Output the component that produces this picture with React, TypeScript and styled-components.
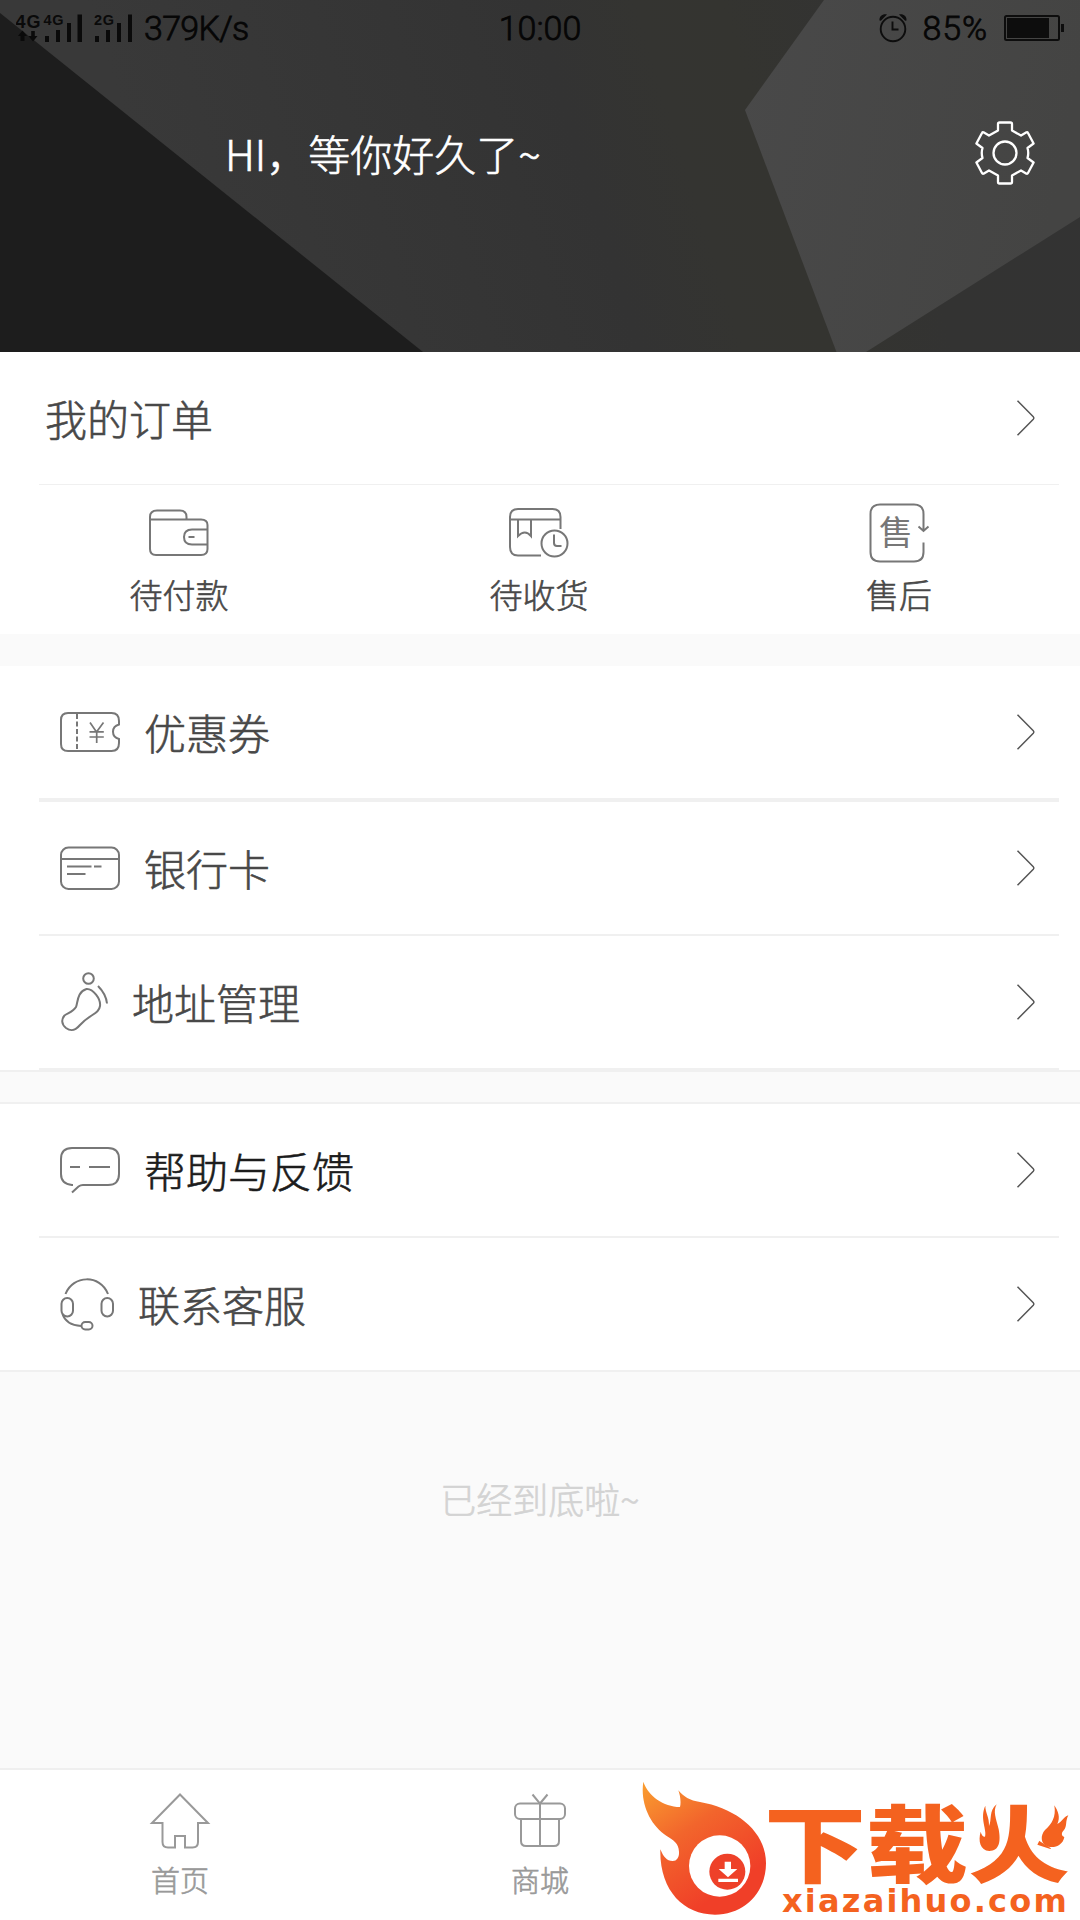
import React from "react";
import styled, { createGlobalStyle } from "styled-components";

const GlobalStyle = createGlobalStyle`
  * { box-sizing: border-box; }
  body { margin: 0; background: #fafafa; }
`;

const Screen = styled.div`
  display: flex;
  flex-direction: column;
  position: relative;
  width: 1080px;
  height: 1920px;
  overflow: hidden;
  background: #fafafa;
  color: #484848;
  font-family: "Noto Sans CJK SC", sans-serif;
  font-weight: 300;
  -webkit-text-stroke-width: 0.6px;
`;

const Hero = styled.header`
  position: relative;
  display: flex;
  flex-direction: column;
  height: 352px;
  flex: none;
  background: #353535;
`;

const HeroArt = styled.svg`
  position: absolute;
  inset: 0;
`;

const StatusBar = styled.div`
  position: relative;
  display: grid;
  grid-template-columns: 1fr auto 1fr;
  align-items: center;
  height: 56px;
  padding: 0 16px;
  color: #060606;
  font-family: Roboto, sans-serif;
  font-weight: 300;
  font-size: 34px;
  line-height: 56px;
  -webkit-text-stroke-width: 0.8px;
`;

const StatusGroup = styled.div<{ $end?: boolean }>`
  display: flex;
  align-items: center;
  justify-content: ${(p) => (p.$end ? "flex-end" : "flex-start")};
`;

const StatusText = styled.span<{ $before?: number; $after?: number; $spacing?: number }>`
  margin-left: ${(p) => p.$before ?? 0}px;
  margin-right: ${(p) => p.$after ?? 0}px;
  letter-spacing: ${(p) => p.$spacing ?? 0}px;
`;

const Welcome = styled.div`
  position: relative;
  display: flex;
  align-items: center;
  justify-content: space-between;
  height: 194px;
  padding: 0 45px 0 225px;
  color: #fff;
`;

const Greeting = styled.span`
  font-size: 42px;
  line-height: 60px;
`;

const Panel = styled.section`
  flex: none;
  background: #fff;
`;

const Rule = styled.div<{ $h?: number; $full?: boolean }>`
  height: ${(p) => p.$h ?? 2}px;
  margin: ${(p) => (p.$full ? "0" : "0 21px 0 39px")};
  background: #f0f0f0;
`;

const Gap = styled.div<{ $h: number }>`
  flex: none;
  height: ${(p) => p.$h}px;
  background: #fafafa;
`;

const Row = styled.div<{ $indent?: number }>`
  display: flex;
  align-items: center;
  gap: 24px;
  height: 132px;
  padding: 0 45px 0 ${(p) => p.$indent ?? 60}px;
`;

const RowLabel = styled.span<{ $dark?: boolean }>`
  flex: 1;
  font-size: 42px;
  line-height: 60px;
  color: ${(p) => (p.$dark ? "#1c1c1c" : "#484848")};
`;

const Orders = styled.div`
  display: grid;
  grid-template-columns: repeat(3, 360px);
  height: 149px;
`;

const OrderItem = styled.div`
  display: flex;
  flex-direction: column;
  align-items: center;
  padding: 18px 2px 0 0;
  font-size: 33px;
  line-height: 40px;
  gap: 11px;
`;

const EndNote = styled.p`
  flex: 1;
  margin: 0;
  padding-top: 100px;
  text-align: center;
  font-size: 36px;
  line-height: 52px;
  color: #d3d3d3;
`;

const TabBar = styled.nav`
  display: grid;
  grid-template-columns: repeat(3, 360px);
  flex: none;
  height: 152px;
  border-top: 2px solid #efefef;
  background: #fff;
`;

const Tab = styled.div`
  display: flex;
  flex-direction: column;
  align-items: center;
  gap: 10px;
  padding-top: 23px;
  color: #999;
  font-size: 29px;
  line-height: 40px;
`;

const Watermark = styled.div`
  position: absolute;
  right: 0;
  bottom: 0;
  display: flex;
  width: 440px;
  height: 144px;
  -webkit-text-stroke-width: 0;
`;

const Brand = styled.div`
  display: flex;
  flex-direction: column;
  margin-left: -4px;
  padding-top: 20px;
  color: #f4621f;
`;

const BrandName = styled.div`
  display: flex;
  height: 88px;
  font-size: 102px;
  line-height: 88px;
  font-weight: 900;
  white-space: nowrap;
  transform: scaleY(0.82);
`;

const BrandFire = styled.span`
  clip-path: polygon(36% -10%, 63% -10%, 63% 45%, 100% 78%, 100% 115%, 0 115%, 0 76%, 36% 50%);
`;

const BrandUrl = styled.div`
  margin: 3px 0 0 18px;
  font-family: "DejaVu Sans", sans-serif;
  font-weight: 700;
  font-size: 32px;
  line-height: 28px;
  letter-spacing: 2.2px;
  white-space: nowrap;
`;

const FlameAccents = styled.svg`
  position: absolute;
  right: 0;
  bottom: 0;
  fill: #f4621f;
`;

const Outline = styled.svg<{ $w?: number; $color?: string }>`
  flex: none;
  display: block;
  overflow: visible;
  fill: none;
  stroke: ${(p) => p.$color ?? "#777"};
  stroke-width: ${(p) => p.$w ?? 2}px;
`;

const Chevron = () => (
  <Outline width="18" height="36" viewBox="0 0 18 36" $w={1.5} $color="#555">
    <path d="M.5 .8 16.300 16.700q1.200 1.300 0 2.600L.5 35.200" />
  </Outline>
);

const SignalIcon = () => (
  <svg width="118" height="30" viewBox="16 12 118 30" fill="#0a0a0a" fontFamily="Liberation Sans, sans-serif" fontWeight="700" strokeWidth="0">
    <text x="15.5" y="27" fontSize="18" textLength="25">4G</text>
    <text x="43.5" y="24" fontSize="14.5" textLength="20">4G</text>
    <text x="94" y="24" fontSize="14.5" textLength="20">2G</text>
    <path d="M22.500 29.500 27 35H24.500V40H20.500V35H18ZM33 40.500 28.500 35H31.200V30H34.800V35H37.500Z" />
    <path d="M45 35h4v6h-4zM56 29h4v12h-4zM67 22h4v19h-4zM77.500 13.500h4.500v27.500h-4.500zM95 35h4v6h-4zM106 29h4v12h-4zM117 22h4v19h-4zM128 13.500h4v27.500h-4z" />
  </svg>
);

const AlarmIcon = () => (
  <svg width="28" height="30" viewBox="0 0 28 30" fill="none" stroke="#0d0d0d" strokeWidth="1.9">
    <circle cx="14" cy="16" r="12.300" />
    <path d="M13.500 8.500V16.500H19.500" />
    <path d="M.5 7.500C0 3 4 .5 8 1.500L1.800 7.800ZM27.500 7.500C28 3 24 .5 20 1.500L26.200 7.800Z" fill="#0d0d0d" stroke="none" />
  </svg>
);

const BatteryIcon = () => (
  <svg width="60" height="28" viewBox="0 0 60 28" fill="#0d0d0d">
    <rect x="1" y="2" width="54" height="24" rx="1.500" fill="none" stroke="#0d0d0d" strokeWidth="2" />
    <rect x="3" y="4" width="42" height="20" />
    <rect x="57" y="10" width="3" height="8" />
  </svg>
);

const GearIcon = () => (
  <Outline width="60" height="64" viewBox="0 0 60 64" $w={2.3} $color="#fff" strokeLinejoin="round">
    <path d="M23 3Q23 1.500 24.500 1.500H35.500Q37 1.500 37 3V9.500L46 14.500L51.500 11.300Q52.500 11 53 12L58.600 22.500L52.500 27Q54 32 52.500 37L58.600 41.500L53 52Q52.500 53 51.500 52.700L46 49.500L37 54.500V61Q37 62.500 35.500 62.500H24.500Q23 62.500 23 61V54.500L14 49.500L8.500 52.700Q7.500 53 7 52L1.400 41.500L7.500 37Q6 32 7.500 27L1.400 22.500L7 12Q7.500 11 8.500 11.300L14 14.500L23 9.500Z" />
    <circle cx="30" cy="32" r="11.500" />
  </Outline>
);

const WalletIcon = () => (
  <Outline width="60" height="60" viewBox="0 0 60 60">
    <path d="M1 17V14Q1 7.500 8 7.500H31Q37.500 7.500 37.500 14V16.500M1 16.500H52Q58.500 16.500 58.500 22V46Q58.500 52 52 52H7Q1 52 1 46ZM58.500 26.500H43Q35 26.500 35 34Q35 41.500 43 41.500H58.500M39.500 34H45.500" />
  </Outline>
);

const ParcelIcon = () => (
  <Outline width="60" height="60" viewBox="0 0 60 60">
    <path d="M51.500 26V14Q51.500 6 43.500 6H9Q1 6 1 14V44Q1 52.500 9 52.500H32M1 16.500H51.500M9 16.500V33Q16 26 22 33V16.500" />
    <circle cx="45.500" cy="40.500" r="13" />
    <path d="M45 31.500V40Q45 43 48 43H52.500" />
  </Outline>
);

const SaleGlyph = styled.text`
  font-family: "Noto Sans CJK SC", sans-serif;
  font-size: 34px;
  font-weight: 400;
  fill: #777;
  stroke: none;
`;

const AfterSaleIcon = () => (
  <Outline width="60" height="60" viewBox="0 0 60 60">
    <path d="M54.500 28V11Q54.500 1.500 45 1.500H11Q1.500 1.500 1.500 11V49Q1.500 58.500 11 58.500H45Q54.500 58.500 54.500 49V39.500M49.500 23.500 54.500 28 59.500 23.500" />
    <SaleGlyph x="10" y="41.500">售</SaleGlyph>
  </Outline>
);

const CouponIcon = () => (
  <Outline width="60" height="40" viewBox="0 0 60 40">
    <path d="M59 12.500V9Q59 1 51.500 1H8Q1 1 1 8V32Q1 39 8 39H51.500Q59 39 59 31V27Q53 25.500 53 19.800Q53 14 59 12.500Z" />
    <path d="M17 2V39" strokeDasharray="5 2.500" />
    <path d="M30 10.500 36.500 20 43.500 10.500M36.700 19.500V31M29.500 19.800H43.800M29.500 25H43.800" strokeWidth="1.700" />
  </Outline>
);

const CardIcon = () => (
  <Outline width="60" height="44" viewBox="0 0 60 44">
    <rect x="1" y="1.500" width="58" height="41.500" rx="7.500" />
    <path d="M1 13H59M7 20.500H31.500M34 20.500H41.500M7 28H25.500" />
  </Outline>
);

const FootIcon = () => (
  <Outline width="48" height="60" viewBox="0 0 48 60">
    <circle cx="28.500" cy="6.500" r="5.300" />
    <path d="M38 14Q46 22 47 31.500M26.500 17C33 16.500 41 27 40 34C39 42 30 42 20 53C15 59 11 59.500 6 56C1 52 1.500 47 4.500 43.500C8 41 13 40 16 35C18 30 17 20 26.500 17Z" />
  </Outline>
);

const ChatIcon = () => (
  <Outline width="60" height="48" viewBox="0 0 60 48">
    <path d="M13 39H12Q1 38 1 28V13Q1 2 12 2H48Q59 2 59 13V28Q59 39 48 39H23Q20.500 39 18.500 40.500L12 46.500M10 21H20M29 21H50" />
  </Outline>
);

const HeadsetIcon = () => (
  <Outline width="54" height="54" viewBox="0 0 54 54">
    <path d="M5.500 17C13-2 40-3 48 17M2.500 37Q6 48 21 49" />
    <rect x="1.500" y="21" width="11.500" height="18.500" rx="5.700" />
    <rect x="41.500" y="21" width="11.500" height="18.500" rx="5.700" />
    <rect x="21.500" y="45" width="11" height="7.500" rx="3.700" />
  </Outline>
);

const HomeIcon = () => (
  <Outline width="58" height="56" viewBox="0 0 58 56" $color="#999">
    <path d="M29 1.500 57 30H47V49Q47 54.500 41.500 54.500H34V43H24V54.500H17Q11.500 54.500 11.500 49V30H1Z" />
  </Outline>
);

const GiftIcon = () => (
  <Outline width="58" height="56" viewBox="0 0 58 56" $color="#999">
    <rect x="4" y="10.500" width="50" height="15.500" rx="5" />
    <path d="M10 26V48Q10 53 15 53H43Q48 53 48 48V26M29 53V10.500L21.500 1.500M29 10.500 36.500 1.500" />
  </Outline>
);

const FlameMark = () => (
  <svg width="128" height="144" viewBox="60 48 384 432">
    <defs>
      <linearGradient id="flame" x1="80" y1="80" x2="300" y2="400" gradientUnits="userSpaceOnUse">
        <stop offset="0" stopColor="#f9992f" />
        <stop offset=".45" stopColor="#f2652c" />
        <stop offset="1" stopColor="#f03f28" />
      </linearGradient>
    </defs>
    <path fill="url(#flame)" d="M70 65C85 108 130 140 180 141C184 125 180 105 175 91C190 110 210 122 240 126C350 145 438 215 438 310C438 400 370 464 285 464C190 464 118 390 121 268C130 290 140 303 158 303C172 303 178 290 177 275C176 250 160 240 140 228C90 195 60 130 70 65Z" />
    <circle cx="299" cy="318" r="92" fill="#fff" />
    <circle cx="322" cy="335" r="54" fill="#ee4129" />
    <path fill="#fff" d="M314 305H333V327H352L324 352 296 327H314ZM295 356H354V366H295Z" />
  </svg>
);

const App = () => (
  <>
    <GlobalStyle />
    <Screen>
      <Hero>
        <HeroArt width="1080" height="352" viewBox="0 0 1080 352">
          <defs>
            <linearGradient id="base" gradientUnits="userSpaceOnUse" x1="100" y1="40" x2="1060" y2="-260">
              <stop offset="0" stopColor="#393939" />
              <stop offset=".42" stopColor="#333333" />
              <stop offset=".52" stopColor="#343431" />
              <stop offset=".6" stopColor="#343430" />
              <stop offset=".72" stopColor="#333332" />
              <stop offset="1" stopColor="#333333" />
            </linearGradient>
            <linearGradient id="facet" x1="0" y1="0" x2="1" y2=".2">
              <stop offset="0" stopColor="#494949" />
              <stop offset="1" stopColor="#444443" />
            </linearGradient>
          </defs>
          <path fill="url(#base)" d="M0 0H1080V352H0Z" />
          <path fill="#1d1d1d" d="M0 13 423 352H0Z" />
          <path fill="url(#facet)" d="M824 0 745 110 836.500 352H866L1080 217V0Z" />
        </HeroArt>
        <StatusBar>
          <StatusGroup>
            <SignalIcon />
            <StatusText $before={10} $spacing={-0.7}>379K/s</StatusText>
          </StatusGroup>
          <StatusText>10:00</StatusText>
          <StatusGroup $end>
            <AlarmIcon />
            <StatusText $before={15} $after={16} $spacing={0.9}>85%</StatusText>
            <BatteryIcon />
          </StatusGroup>
        </StatusBar>
        <Welcome>
          <Greeting>HI，等你好久了~</Greeting>
          <GearIcon />
        </Welcome>
      </Hero>

      <Panel>
        <Row $indent={45}>
          <RowLabel>我的订单</RowLabel>
          <Chevron />
        </Row>
        <Rule $h={1} />
        <Orders>
          <OrderItem><WalletIcon />待付款</OrderItem>
          <OrderItem><ParcelIcon />待收货</OrderItem>
          <OrderItem><AfterSaleIcon />售后</OrderItem>
        </Orders>
      </Panel>
      <Gap $h={32} />
      <Panel>
        <Row><CouponIcon /><RowLabel>优惠券</RowLabel><Chevron /></Row>
        <Rule $h={4} />
        <Row><CardIcon /><RowLabel>银行卡</RowLabel><Chevron /></Row>
        <Rule />
        <Row><FootIcon /><RowLabel>地址管理</RowLabel><Chevron /></Row>
        <Rule />
        <Rule $full />
      </Panel>
      <Gap $h={30} />
      <Panel>
        <Rule $full />
        <Row><ChatIcon /><RowLabel $dark>帮助与反馈</RowLabel><Chevron /></Row>
        <Rule />
        <Row><HeadsetIcon /><RowLabel>联系客服</RowLabel><Chevron /></Row>
        <Rule $full />
      </Panel>
      <EndNote>已经到底啦~</EndNote>

      <TabBar>
        <Tab><HomeIcon />首页</Tab>
        <Tab><GiftIcon />商城</Tab>
      </TabBar>

      <Watermark>
        <FlameMark />
        <Brand>
          <BrandName>下载<BrandFire>火</BrandFire></BrandName>
          <BrandUrl>xiazaihuo.com</BrandUrl>
        </Brand>
        <FlameAccents width="440" height="140" viewBox="0 0 1320 420">
          <path d="M1070 73C1058 95 1068 115 1076 148C1083 185 1078 213 1048 213C1020 211 1014 182 1022 155C1024 165 1030 171 1035 170C1042 150 1018 115 1036 77C1036 100 1048 110 1047 138C1056 120 1046 92 1070 73Z" />
          <path d="M1243 76C1254 93 1262 112 1252 132C1266 127 1270 110 1285 106C1275 125 1282 138 1272 150C1262 160 1265 168 1273 171C1269 195 1245 205 1225 200C1200 193 1201 165 1215 150C1235 132 1249 112 1243 76Z" />
        </FlameAccents>
      </Watermark>
    </Screen>
  </>
);

export default App;
